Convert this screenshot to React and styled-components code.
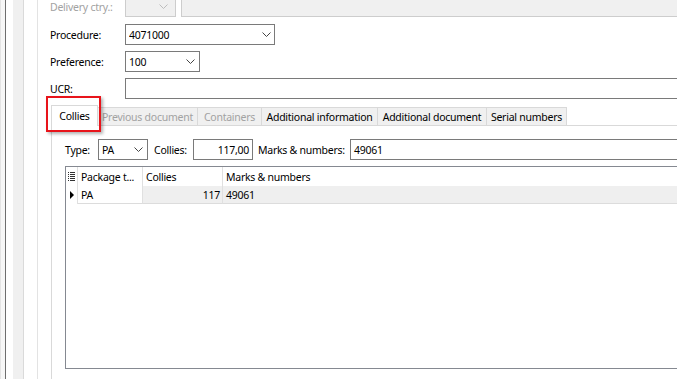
import React from "react";
import styled, { createGlobalStyle } from "styled-components";

const GlobalStyle = createGlobalStyle`
  html, body { margin: 0; padding: 0; background: #fff; overflow: hidden; }
  body {
    font-family: "Noto Sans", "Segoe UI", sans-serif;
    font-size: 10.5px;
    letter-spacing: -0.25px;
    color: #000;
  }
  * { box-sizing: border-box; }
`;

const Screen = styled.div`
  display: flex;
  width: 690px;
  height: 379px;
  overflow: hidden;
  background: #fff;
`;

const OuterEdge = styled.div`
  width: 5px;
  flex: none;
  background: #f7f7f7;
  border-left: 1px solid #e4e4e4;
`;

const Frame = styled.div`
  flex: 1;
  min-width: 0;
  display: flex;
  border-left: 1px solid #6e6e6e;
  padding-left: 7px;
`;

const Gutter = styled.div`
  width: 11px;
  flex: none;
  background: #f0f0f0;
  border-right: 1px solid #dadada;
`;

const GutterGap = styled.div`
  width: 13px;
  flex: none;
`;

const Panel = styled.div`
  flex: 1;
  min-width: 0;
  display: flex;
  flex-direction: column;
  border-left: 1px solid #e3e3e3;
  padding-left: 12px;
`;

const Form = styled.div`
  display: flex;
  flex-direction: column;
  gap: 6px;
  margin-top: -4px;
`;

const FieldRow = styled.div`
  display: flex;
  align-items: center;
  height: 21px;
  flex: none;
  &:first-child { margin-bottom: 1px; }
`;

const Label = styled.span`
  width: ${(p) => p.$w || 75}px;
  flex: none;
  white-space: nowrap;
  color: ${(p) => (p.$disabled ? "#a2a2a2" : "#000")};
`;

const Combo = styled.div`
  width: ${(p) => p.$w}px;
  height: 21px;
  flex: none;
  display: flex;
  align-items: center;
  padding-left: 3px;
  border: 1px solid ${(p) => (p.$disabled ? "#cdcdcd" : "#7a7a7a")};
  background: ${(p) => (p.$disabled ? "#f0f0f0" : "#fff")};
  margin-left: ${(p) => p.$ml || 0}px;
`;

const ComboText = styled.span`
  flex: 1;
  white-space: nowrap;
  overflow: hidden;
`;

const ChevronBox = styled.svg`
  flex: none;
  margin-right: ${(p) => p.$mr}px;
`;

const Chevron = ({ disabled, mr = 3 }) => (
  <ChevronBox $mr={mr} width="9" height="5" viewBox="0 0 9 5">
    <polyline
      points="0.5,0.5 4.5,4.5 8.5,0.5"
      fill="none"
      stroke={disabled ? "#bdbdbd" : "#444"}
      strokeWidth="1"
    />
  </ChevronBox>
);

const TextBox = styled.div`
  height: 21px;
  flex: ${(p) => (p.$w ? "none" : "1")};
  width: ${(p) => (p.$w ? `${p.$w}px` : "auto")};
  display: flex;
  align-items: center;
  justify-content: ${(p) => (p.$right ? "flex-end" : "flex-start")};
  padding: 0 3px;
  border: 1px solid ${(p) => (p.$disabled ? "#cdcdcd" : "#7a7a7a")};
  background: ${(p) => (p.$disabled ? "#f0f0f0" : "#fff")};
  margin-left: ${(p) => p.$ml || 0}px;
  white-space: nowrap;
`;

const TabControl = styled.div`
  flex: 1;
  display: flex;
  flex-direction: column;
  margin-top: 6px;
  margin-left: 1px;
  min-height: 0;
`;

const TabStrip = styled.div`
  display: flex;
  align-items: flex-end;
  height: 21px;
  flex: none;
  border-bottom: 1px solid #d9d9d9;
`;

const Tab = styled.div`
  position: relative;
  width: ${(p) => p.$w}px;
  flex: none;
  height: ${(p) => (p.$active ? 21 : 18)}px;
  margin-bottom: ${(p) => (p.$active ? -1 : 0)}px;
  display: flex;
  align-items: center;
  justify-content: center;
  white-space: nowrap;
  background: ${(p) => (p.$active ? "#fff" : "#f0f0f0")};
  border-top: 1px solid #d9d9d9;
  border-right: 1px solid #d9d9d9;
  border-left: ${(p) => (p.$active ? "1px solid #d9d9d9" : "none")};
  color: ${(p) => (p.$disabled ? "#a2a2a2" : "#000")};
  z-index: ${(p) => (p.$active ? 1 : 0)};
`;

const Highlight = styled.div`
  position: absolute;
  left: -6px;
  top: -10px;
  width: 55px;
  height: 36px;
  border: 2px solid #e8141b;
  box-shadow: 2px 2px 3px rgba(0, 0, 0, 0.3);
  pointer-events: none;
`;

const TabPage = styled.div`
  flex: 1;
  min-height: 0;
  display: flex;
  flex-direction: column;
  gap: 6px;
  border-left: 1px solid #d9d9d9;
  padding: 13px 0 10px 13px;
`;

const FilterRow = styled.div`
  display: flex;
  align-items: center;
  height: 21px;
  flex: none;
`;

const InlineLabel = styled.span`
  flex: none;
  width: ${(p) => p.$w}px;
  white-space: nowrap;
  margin-left: ${(p) => p.$ml || 0}px;
`;

const Grid = styled.div`
  flex: 1;
  min-height: 0;
  display: flex;
  flex-direction: column;
  border: 1px solid #858991;
  border-right: none;
`;

const GridRow = styled.div`
  display: grid;
  grid-template-columns: 12px 65px 80px 1fr;
  height: ${(p) => p.$h}px;
  flex: none;
`;

const Cell = styled.div`
  display: flex;
  align-items: center;
  justify-content: ${(p) => (p.$right ? "flex-end" : "flex-start")};
  padding: ${(p) => (p.$right ? "0 2px 0 0" : "0 0 0 3px")};
  white-space: nowrap;
  overflow: hidden;
  background: ${(p) => (p.$shaded ? "#efefef" : "#fff")};
  border-right: ${(p) => (p.$last ? "none" : "1px solid #e0e0e0")};
  border-bottom: ${(p) => (p.$bottom ? "1px solid #dcdcdc" : "none")};
`;

const IndicatorCell = styled.div`
  display: flex;
  align-items: center;
  justify-content: center;
  border-right: 1px solid #e0e0e0;
  background: #fff;
`;

const ColumnsIcon = () => (
  <svg width="7" height="10" viewBox="0 0 7 10">
    {[0, 2, 4, 6, 8].map((y) => (
      <g key={y}>
        <rect x="0" y={y} width="1" height="1" fill="#333" />
        <rect x="2" y={y} width="5" height="1" fill="#333" />
      </g>
    ))}
  </svg>
);

const RowPointer = () => (
  <svg width="4" height="8" viewBox="0 0 4 8">
    <polygon points="0,0 4,4 0,8" fill="#000" />
  </svg>
);

const tabs = [
  { label: "Collies", w: 47, active: true },
  { label: "Previous document", w: 100, disabled: true },
  { label: "Containers", w: 64, disabled: true },
  { label: "Additional information", w: 116 },
  { label: "Additional document", w: 109 },
  { label: "Serial numbers", w: 80 },
];

export default function App() {
  return (
    <>
      <GlobalStyle />
      <Screen>
        <OuterEdge />
        <Frame>
          <Gutter />
          <GutterGap />
          <Panel>
            <Form>
              <FieldRow>
                <Label $disabled>Delivery ctry.:</Label>
                <Combo $w={51} $disabled>
                  <ComboText />
                  <Chevron disabled mr={7} />
                </Combo>
                <TextBox $disabled $ml={5} />
              </FieldRow>
              <FieldRow>
                <Label>Procedure:</Label>
                <Combo $w={150}>
                  <ComboText>4071000</ComboText>
                  <Chevron />
                </Combo>
              </FieldRow>
              <FieldRow>
                <Label>Preference:</Label>
                <Combo $w={75}>
                  <ComboText>100</ComboText>
                  <Chevron mr={4} />
                </Combo>
              </FieldRow>
              <FieldRow>
                <Label>UCR:</Label>
                <TextBox />
              </FieldRow>
            </Form>

            <TabControl>
              <TabStrip>
                {tabs.map((t) => (
                  <Tab key={t.label} $w={t.w} $active={t.active} $disabled={t.disabled}>
                    {t.label}
                    {t.active && <Highlight />}
                  </Tab>
                ))}
              </TabStrip>
              <TabPage>
                <FilterRow>
                  <InlineLabel $w={33}>Type:</InlineLabel>
                  <Combo $w={50}>
                    <ComboText>PA</ComboText>
                    <Chevron mr={4} />
                  </Combo>
                  <InlineLabel $w={39} $ml={6}>Collies:</InlineLabel>
                  <TextBox $w={60} $right>117,00</TextBox>
                  <InlineLabel $w={92} $ml={5}>Marks &amp; numbers:</InlineLabel>
                  <TextBox>49061</TextBox>
                </FilterRow>
                <Grid>
                  <GridRow $h={19}>
                    <IndicatorCell>
                      <ColumnsIcon />
                    </IndicatorCell>
                    <Cell>Package t...</Cell>
                    <Cell>Collies</Cell>
                    <Cell $last>Marks &amp; numbers</Cell>
                  </GridRow>
                  <GridRow $h={18}>
                    <IndicatorCell>
                      <RowPointer />
                    </IndicatorCell>
                    <Cell $bottom>PA</Cell>
                    <Cell $shaded $right $bottom>117</Cell>
                    <Cell $shaded $last $bottom>49061</Cell>
                  </GridRow>
                </Grid>
              </TabPage>
            </TabControl>
          </Panel>
        </Frame>
      </Screen>
    </>
  );
}
